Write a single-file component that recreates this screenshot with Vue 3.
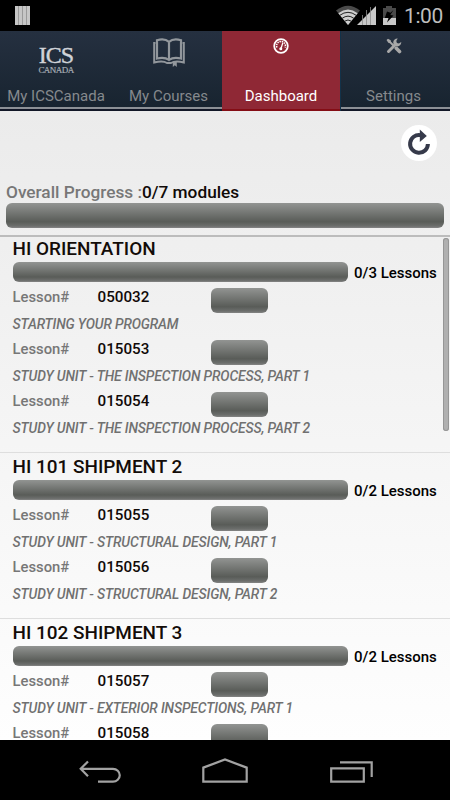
<script setup>
const tabs = [
  { id: 'home', label: 'My ICSCanada' },
  { id: 'courses', label: 'My Courses' },
  { id: 'dashboard', label: 'Dashboard' },
  { id: 'settings', label: 'Settings' },
]
const modules = [
  {
    title: 'HI ORIENTATION', count: '0/3 Lessons',
    lessons: [
      { no: '050032', unit: 'STARTING YOUR PROGRAM' },
      { no: '015053', unit: 'STUDY UNIT - THE INSPECTION PROCESS, PART 1' },
      { no: '015054', unit: 'STUDY UNIT - THE INSPECTION PROCESS, PART 2' },
    ],
  },
  {
    title: 'HI 101 SHIPMENT 2', count: '0/2 Lessons',
    lessons: [
      { no: '015055', unit: 'STUDY UNIT - STRUCTURAL DESIGN, PART 1' },
      { no: '015056', unit: 'STUDY UNIT - STRUCTURAL DESIGN, PART 2' },
    ],
  },
  {
    title: 'HI 102 SHIPMENT 3', count: '0/2 Lessons',
    lessons: [
      { no: '015057', unit: 'STUDY UNIT - EXTERIOR INSPECTIONS, PART 1' },
      { no: '015058', unit: '' },
    ],
  },
]
</script>

<template>
  <div class="screen">
    <header class="status">
      <svg class="bars" width="15" height="19" viewBox="0 0 15 19">
        <path d="M0 0h15v19H0z" fill="#9a9a9a" />
        <path d="M0 0h3v19H0zM4 0h3v19H4zM8 0h3v19H8zM12 0h3v19h-3z" fill="#c6c6c6" />
      </svg>
      <svg class="signals" width="62" height="22" viewBox="0 0 62 22">
        <path d="M0 5.500Q12-4 24 5.500L12 20z" fill="#4a4a4a" />
        <path d="M2.300 8.200Q12 .8 21.700 8.200L12 20z" fill="#cfcfcf" />
        <path d="M3.800 10.300Q12 4.300 20.200 10.300M6.200 13.300Q12 9 17.800 13.300M8.600 16.200Q12 13.800 15.400 16.200" fill="none" stroke="#222" stroke-width="1" />
        <path d="M40 1v19H21z" fill="#c8c8c8" />
        <path d="M26.500 10v10M30.500 5v15M34.500 2v18" stroke="#8a8a8a" stroke-width=".8" />
        <path d="M50 1h6v2h4v17H47V3h3z" fill="#4a4a4a" />
        <path d="M47 13h13v7H47z" fill="#c8c8c8" />
        <path d="M57.500 5l-3 2.800L51 6.500 48.800 13h3.700L51 17.500l6.500-7-3.200-.4z" fill="#000" />
      </svg>
      <span class="clock">1:00</span>
    </header>

    <nav class="tabs">
      <div v-for="t in tabs" :key="t.id" class="tab" :class="[t.id, { active: t.id === 'dashboard' }]">
        <div class="icon">
          <div v-if="t.id === 'home'" class="logo">
            <span class="ics">ICS</span>
            <span class="canada">CANADA</span>
          </div>
          <svg v-else-if="t.id === 'courses'" width="32" height="30" viewBox="0 0 32 30" fill="none" stroke="#92979c">
            <path d="M16 3.800C13 1.200 7.500 1.200 4 2.200V20.500c4-1 9-.8 12 1.500 3-2.300 8-2.500 12-1.500V2.200C24.500 1.200 19 1.200 16 3.800zM16 3.800V22" stroke-width="2.200" />
            <path d="M2.500 5H1.200v19.500c5-1.200 10-1.400 12.800.5h4c3-1.900 8-1.700 12.800-.5V5h-1.300" stroke-width="2" />
            <path d="M19.800 24h4v5l-2-1.700-2 1.700z" fill="#92979c" stroke="none" />
          </svg>
          <svg v-else-if="t.id === 'dashboard'" width="16" height="16" viewBox="0 0 16 16" fill="none" stroke="#fff">
            <circle cx="8" cy="8" r="6.800" stroke-width="1.800" />
            <path d="M3.900 9.500A4.400 4.400 0 1 1 12.100 9.500" stroke-width="1.500" stroke-dasharray="1.500 .8" />
            <path d="M8 10.500L9.800 5" stroke-width="1.300" />
            <circle cx="7.800" cy="10.700" r="1.500" fill="#fff" stroke="none" />
          </svg>
          <svg v-else width="16" height="16" viewBox="0 0 16 16">
            <path d="M2.500 13.500l7-7" stroke="#a8a8a8" stroke-width="3" stroke-linecap="round" />
            <path d="M15.200 4a4 4 0 1 1-3.500-3.500L10.300 3l.6 1.900 2 .5z" fill="#a8a8a8" />
            <path d="M.5 2L2 .8l2.700 1.500.3 1.500L8.500 7 7 8.500 3.800 5.200 2.300 4.800z" fill="#a8a8a8" />
            <path d="M10.300 10.300l3.200 3.200" stroke="#a8a8a8" stroke-width="3.600" stroke-linecap="round" />
          </svg>
        </div>
        <span class="label">{{ t.label }}</span>
      </div>
    </nav>

    <main class="content">
      <section class="overall">
        <button class="refresh" aria-label="Refresh">
          <svg width="26" height="28" viewBox="0 0 26 28">
            <path d="M14.500 6.100A8.900 8.900 0 1 0 21.900 15" fill="none" stroke="#363a4a" stroke-width="4" />
            <path d="M13.800.5L20.800 7l-7 6z" fill="#363a4a" />
          </svg>
        </button>
        <p class="summary"><span class="muted">Overall Progress :</span><b>0/7 modules</b></p>
        <div class="bar total"></div>
      </section>

      <div class="list">
        <section v-for="m in modules" :key="m.title" class="module">
          <h2>{{ m.title }}</h2>
          <div class="progress">
            <div class="bar"></div>
            <span class="count">{{ m.count }}</span>
          </div>
          <div v-for="l in m.lessons" :key="l.no" class="lesson">
            <div class="line">
              <span class="key">Lesson#</span>
              <span class="no">{{ l.no }}</span>
              <div class="bar small"></div>
            </div>
            <p v-if="l.unit" class="unit">{{ l.unit }}</p>
          </div>
        </section>
        <div class="thumb"></div>
      </div>
    </main>

    <footer class="navbar">
      <svg width="450" height="60" viewBox="0 0 450 60" fill="none" stroke="#a2a2a2" stroke-width="2.200">
        <path d="M80.500 28.800H113a6.700 6.400 0 0 1 0 12.900H98M88 21.500l-7.300 7.300 7.300 7.400" />
        <path d="M203.300 41.700V27.600L225 19.500l21.700 8.100v14.100z" />
        <path d="M331.200 28.300h32.600v13.400h-32.600zM340 22.300h31.700V37" />
      </svg>
    </footer>
  </div>
</template>

<style>
body { margin: 0; }
</style>

<style scoped>
.screen {
  width: 450px;
  height: 800px;
  display: flex;
  flex-direction: column;
  overflow: hidden;
  font-family: Roboto, "Liberation Sans", sans-serif;
  background: #000;
}
.status {
  height: 31px;
  flex: none;
  display: flex;
  align-items: flex-start;
  box-sizing: border-box;
  padding: 6px 8px 0 15px;
}
.signals { margin: -1px 0 0 auto; }
.clock {
  margin-left: 7px;
  width: 38px;
  font-size: 21px;
  line-height: 20px;
  letter-spacing: -0.400px;
  color: #bebebe;
  white-space: nowrap;
}
.signals + .clock { margin-left: 6px; }
.tabs { height: 80px; flex: none; display: flex; }
.tab {
  width: 112px;
  box-sizing: border-box;
  display: flex;
  flex-direction: column;
  align-items: center;
  background: linear-gradient(#253040, #182430 76px, #8c9096 76px, #8c9096 78.500px, #111626 78.500px);
  color: #85898d;
}
.tab.courses { width: 110px; padding-left: 3px; }
.tab.active { width: 119px; background: linear-gradient(#8f2835 78px, #840d15 78px); color: #fff; border-right: 1px solid #123249; }
.tab.settings { width: 109px; padding-right: 4px; }
.icon { height: 55px; display: flex; align-items: flex-start; padding-top: 7px; box-sizing: border-box; }
.home .icon { padding-top: 13px; }
.logo {
  display: flex;
  flex-direction: column;
  align-items: center;
  font-family: "Liberation Serif", serif;
  color: #d0d3d8;
}
.ics { font-size: 24px; line-height: 23px; letter-spacing: -1px; -webkit-text-stroke: 0.400px #d0d3d8; }
.canada { font-size: 9px; line-height: 8px; letter-spacing: -0.550px; margin-top: -1px; color: #a7adb5; -webkit-text-stroke: 0.200px #a7adb5; }
.label { font-size: 15px; line-height: 21px; white-space: nowrap; }
.content {
  flex: 1;
  min-height: 0;
  display: flex;
  flex-direction: column;
  background: linear-gradient(#ebebeb, #fefefe);
}
.overall {
  height: 126px;
  flex: none;
  box-sizing: border-box;
  padding: 14px 6px 0;
  border-bottom: 2px solid #bcbcbc;
  display: flex;
  flex-direction: column;
}
.refresh {
  align-self: flex-end;
  margin-right: 7px;
  width: 36px;
  height: 36px;
  padding: 0 0 1px;
  border: 0;
  border-radius: 50%;
  background: #fff;
  display: flex;
  align-items: center;
  justify-content: center;
}
.summary { margin: 21px 0 0; height: 21px; font-size: 17.250px; line-height: 21px; font-weight: 500; white-space: nowrap; color: #100a08; }
.summary b { font-weight: 500; }
.summary .muted { color: #777; }
.bar {
  border-radius: 6px;
  background: linear-gradient(#929492, #595c58 75%, #6c6e6c 92%, #858585);
  height: 20px;
}
.total { height: 25px; width: 438px; }
.list { flex: 1; min-height: 0; overflow: hidden; position: relative; margin-top: -2px; }
.module { padding: 4px 0 12px 12.500px; border-bottom: 1px solid #dedede; }
h2 { margin: 0; height: 23px; font-size: 18.950px; line-height: 20px; font-weight: 500; color: #130c08; white-space: nowrap; }
.progress { height: 20px; margin-bottom: 2px; display: flex; gap: 6px; }
.progress .bar { width: 335.500px; }
.count { font-size: 15px; line-height: 22px; font-weight: 500; white-space: nowrap; }
.lesson { height: 52px; }
.line { display: flex; height: 28px; font-size: 15.200px; line-height: 26px; font-weight: 500; color: #100a08; }
.key { width: 85px; font-size: 14.800px; color: #777; }
.no { width: 113.500px; }
.small { width: 57px; height: 25px; margin-top: 4px; }
.unit { margin: 0; font-size: 13.800px; line-height: 24px; letter-spacing: -0.120px; font-style: italic; font-weight: 500; color: #707070; white-space: nowrap; }
.thumb { position: absolute; right: 1px; top: 3px; width: 6px; height: 193px; border-radius: 3px; background: #b0b0b0; box-shadow: inset 0 0 0 1px #969696; }
.navbar { height: 60px; flex: none; background: #000; }
.navbar svg { display: block; }
</style>
